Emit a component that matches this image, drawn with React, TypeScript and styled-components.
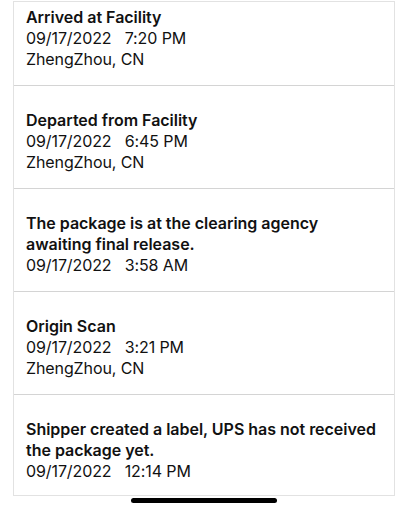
import React from 'react'
import styled, { createGlobalStyle } from 'styled-components'

const GlobalStyle = createGlobalStyle`
  html, body {
    margin: 0;
    padding: 0;
    background: #ffffff;
  }
  body {
    font-family: Inter, 'Liberation Sans', Arial, sans-serif;
    color: #111111;
    -webkit-font-smoothing: antialiased;
  }
`

const Screen = styled.div`
  width: 408px;
  height: 512px;
  display: flex;
  flex-direction: column;
  align-items: center;
  padding-top: 1px;
  box-sizing: border-box;
  overflow: hidden;
`

const List = styled.div`
  width: 382px;
  height: 495px;
  box-sizing: border-box;
  border: 1px solid #e2e2e2;
  overflow: hidden;
  display: flex;
  flex-direction: column;
`

// the list is scrolled a little, the first event is partly out of view
const Track = styled.div`
  display: flex;
  flex-direction: column;
  margin-top: -19px;
`

const Event = styled.div`
  padding: 24px 11px 15px 12px;
  border-bottom: 1px solid #d4d4d4;
  display: flex;
  flex-direction: column;
  flex-shrink: 0;
`

const Title = styled.div`
  font-size: 16px;
  line-height: 21px;
  font-weight: 600;
  letter-spacing: -0.02px;
  color: #111111;
`

const Line = styled.div`
  font-size: 16px;
  line-height: 21px;
  font-weight: 400;
  letter-spacing: -0.1px;
  color: #111111;
  white-space: pre;
`

const HomeIndicator = styled.div`
  width: 146px;
  height: 5px;
  border-radius: 3px;
  background: #000000;
  margin-top: 2px;
  flex-shrink: 0;
`

type TrackingEvent = {
  title: string
  date: string
  time: string
  place?: string
}

const events: TrackingEvent[] = [
  { title: 'Arrived at Facility', date: '09/17/2022', time: '7:20 PM', place: 'ZhengZhou, CN' },
  { title: 'Departed from Facility', date: '09/17/2022', time: '6:45 PM', place: 'ZhengZhou, CN' },
  { title: 'The package is at the clearing agency awaiting final release.', date: '09/17/2022', time: '3:58 AM' },
  { title: 'Origin Scan', date: '09/17/2022', time: '3:21 PM', place: 'ZhengZhou, CN' },
  {
    title: 'Shipper created a label, UPS has not received the package yet.',
    date: '09/17/2022',
    time: '12:14 PM',
  },
]

export default function App() {
  return (
    <>
      <GlobalStyle />
      <Screen>
        <List>
          <Track>
            {events.map((e, i) => (
              <Event key={i}>
                <Title>{e.title}</Title>
                <Line>{`${e.date}   ${e.time}`}</Line>
                {e.place && <Line>{e.place}</Line>}
              </Event>
            ))}
          </Track>
        </List>
        <HomeIndicator />
      </Screen>
    </>
  )
}
